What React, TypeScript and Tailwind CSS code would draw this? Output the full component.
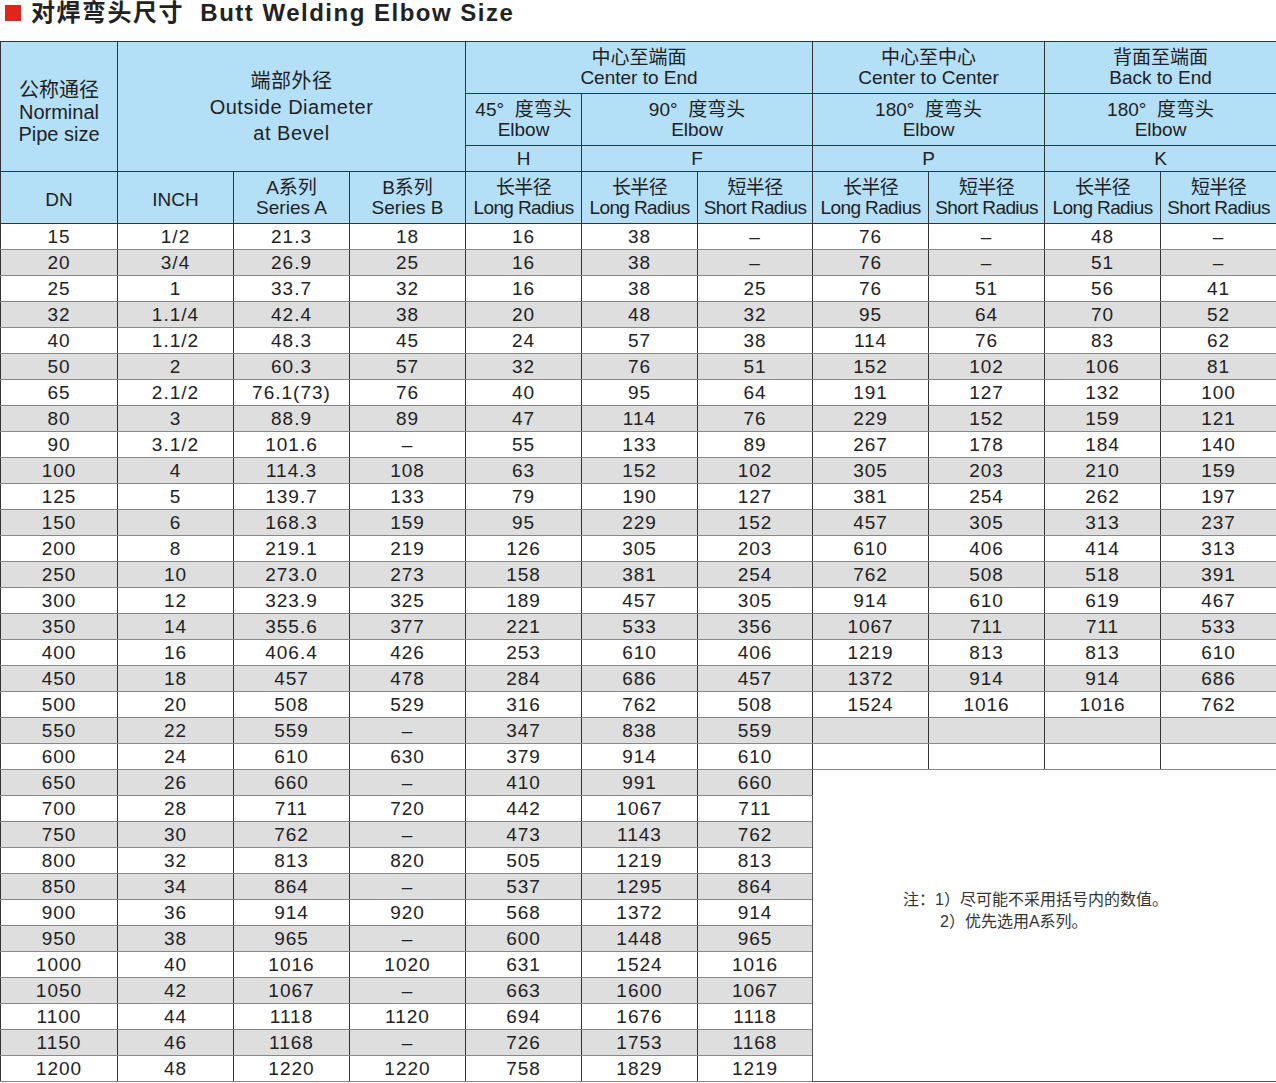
import React from "react";

const rows: string[][] = [
  ["15", "1/2", "21.3", "18", "16", "38", "–", "76", "–", "48", "–"],
  ["20", "3/4", "26.9", "25", "16", "38", "–", "76", "–", "51", "–"],
  ["25", "1", "33.7", "32", "16", "38", "25", "76", "51", "56", "41"],
  ["32", "1.1/4", "42.4", "38", "20", "48", "32", "95", "64", "70", "52"],
  ["40", "1.1/2", "48.3", "45", "24", "57", "38", "114", "76", "83", "62"],
  ["50", "2", "60.3", "57", "32", "76", "51", "152", "102", "106", "81"],
  ["65", "2.1/2", "76.1(73)", "76", "40", "95", "64", "191", "127", "132", "100"],
  ["80", "3", "88.9", "89", "47", "114", "76", "229", "152", "159", "121"],
  ["90", "3.1/2", "101.6", "–", "55", "133", "89", "267", "178", "184", "140"],
  ["100", "4", "114.3", "108", "63", "152", "102", "305", "203", "210", "159"],
  ["125", "5", "139.7", "133", "79", "190", "127", "381", "254", "262", "197"],
  ["150", "6", "168.3", "159", "95", "229", "152", "457", "305", "313", "237"],
  ["200", "8", "219.1", "219", "126", "305", "203", "610", "406", "414", "313"],
  ["250", "10", "273.0", "273", "158", "381", "254", "762", "508", "518", "391"],
  ["300", "12", "323.9", "325", "189", "457", "305", "914", "610", "619", "467"],
  ["350", "14", "355.6", "377", "221", "533", "356", "1067", "711", "711", "533"],
  ["400", "16", "406.4", "426", "253", "610", "406", "1219", "813", "813", "610"],
  ["450", "18", "457", "478", "284", "686", "457", "1372", "914", "914", "686"],
  ["500", "20", "508", "529", "316", "762", "508", "1524", "1016", "1016", "762"],
  ["550", "22", "559", "–", "347", "838", "559", "", "", "", ""],
  ["600", "24", "610", "630", "379", "914", "610", "", "", "", ""],
  ["650", "26", "660", "–", "410", "991", "660"],
  ["700", "28", "711", "720", "442", "1067", "711"],
  ["750", "30", "762", "–", "473", "1143", "762"],
  ["800", "32", "813", "820", "505", "1219", "813"],
  ["850", "34", "864", "–", "537", "1295", "864"],
  ["900", "36", "914", "920", "568", "1372", "914"],
  ["950", "38", "965", "–", "600", "1448", "965"],
  ["1000", "40", "1016", "1020", "631", "1524", "1016"],
  ["1050", "42", "1067", "–", "663", "1600", "1067"],
  ["1100", "44", "1118", "1120", "694", "1676", "1118"],
  ["1150", "46", "1168", "–", "726", "1753", "1168"],
  ["1200", "48", "1220", "1220", "758", "1829", "1219"],
];

const H = "border border-[#333] bg-[#b3dff7] text-center align-middle leading-[20px] p-0";
const D = "border-x border-x-[#333] border-y border-y-[#888] text-center p-0 h-[26px] leading-[20px]";
const font = { fontFamily: '"Liberation Sans", "Noto Sans CJK SC", sans-serif' };

export default function App() {
  return (
    <div className="w-[1276px] h-[1083px] bg-white text-[#222] overflow-hidden" style={font}>
      <div className="h-[41px] flex items-start gap-[10px] pl-[5px] pt-[2px]">
        <div className="w-[16px] h-[16px] bg-[#e3241b] mt-[3px]" />
        <div className="text-[24px] font-bold leading-[22px] tracking-[1.5px] text-[#222]">
          对焊弯头尺寸&nbsp; Butt Welding Elbow Size
        </div>
      </div>
      <table className="table-fixed border-collapse w-[1276px] text-[19px]">
        <colgroup>
          {[117, 116, 116, 116, 116, 116, 115, 116, 116, 116, 116].map((w, i) => (
            <col key={i} style={{ width: w }} />
          ))}
        </colgroup>
        <thead>
          <tr className="h-[52px]">
            <td rowSpan={3} className={H + " pt-[10px] leading-[22px] text-[20px]"}>
              公称通径<br />Norminal<br />Pipe size
            </td>
            <td rowSpan={3} colSpan={3} className={H + " leading-[26px] text-[20px] tracking-[0.5px]"}>
              端部外径<br />Outside Diameter<br />at Bevel
            </td>
            <td colSpan={3} className={H + " leading-[19px]"}>
              中心至端面<br />Center to End
            </td>
            <td colSpan={2} className={H + " leading-[19px]"}>
              中心至中心<br />Center to Center
            </td>
            <td colSpan={2} className={H + " leading-[19px]"}>
              背面至端面<br />Back to End
            </td>
          </tr>
          <tr className="h-[52px]">
            <td className={H}>45°&nbsp; 度弯头<br />Elbow</td>
            <td colSpan={2} className={H}>90°&nbsp; 度弯头<br />Elbow</td>
            <td colSpan={2} className={H}>180°&nbsp; 度弯头<br />Elbow</td>
            <td colSpan={2} className={H}>180°&nbsp; 度弯头<br />Elbow</td>
          </tr>
          <tr className="h-[26px]">
            <td className={H}>H</td>
            <td colSpan={2} className={H}>F</td>
            <td colSpan={2} className={H}>P</td>
            <td colSpan={2} className={H}>K</td>
          </tr>
          <tr className="h-[52px]">
            <td className={H + " pt-[4px]"}>DN</td>
            <td className={H + " pt-[4px]"}>INCH</td>
            <td className={H}>A系列<br />Series A</td>
            <td className={H}>B系列<br />Series B</td>
            {Array.from({ length: 7 }).map((_, i) => (
              <td key={i} className={H + " tracking-[-0.6px]"}>
                {i === 0 || i === 1 || i === 3 || i === 5 ? "长半径" : "短半径"}
                <br />
                {i === 0 || i === 1 || i === 3 || i === 5 ? "Long Radius" : "Short Radius"}
              </td>
            ))}
          </tr>
        </thead>
        <tbody>
          {rows.map((r, ri) => (
            <tr key={ri} className={"h-[26px] " + (ri % 2 === 1 ? "bg-[#dedede]" : "bg-white")}>
              {r.map((c, ci) => (
                <td key={ci} className={D + " tracking-[1px]"}>{c}</td>
              ))}
              {ri === 21 && (
                <td colSpan={4} rowSpan={12} className="border border-[#555] bg-white align-middle p-0">
                  <div className="text-[16px] leading-[22px] text-[#333] pl-[90px] pb-[30px]">
                    注：1）尽可能不采用括号内的数值。<br />
                    <span className="pl-[37px]">2）优先选用A系列。</span>
                  </div>
                </td>
              )}
            </tr>
          ))}
        </tbody>
      </table>
    </div>
  );
}
